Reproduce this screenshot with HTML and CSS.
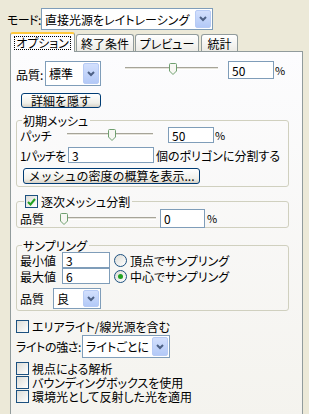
FILE: index.html
```html
<!DOCTYPE html>
<html lang="ja">
<head>
  <meta charset="UTF-8" />
  <title>レンダリング設定</title>
  <link rel="stylesheet" href="styles.css">
</head>
<body>
  <div class="dialog">
    <div class="mode-row">
      <span class="mode-label">モード:</span>
      <div class="combo mode-combo">
        <span class="combo-text">直接光源をレイトレーシング</span>
        <span class="combo-btn"><svg width="8" height="6" viewBox="0 0 8 6"><polyline points="1,1 4,4 7,1" fill="none" stroke="#4d6185" stroke-width="2"/></svg></span>
      </div>
    </div>

    <div class="tabs">
      <div class="tab active"><span class="focus">オプション</span></div>
      <div class="tab tab-end">終了条件</div>
      <div class="tab tab-preview">プレビュー</div>
      <div class="tab tab-stats">統計</div>
    </div>

    <div class="panel">
      <div class="row quality-row">
        <span class="quality-label">品質:</span>
        <div class="combo quality-combo">
          <span class="combo-text">標準</span>
          <span class="combo-btn"><svg width="8" height="6" viewBox="0 0 8 6"><polyline points="1,1 4,4 7,1" fill="none" stroke="#4d6185" stroke-width="2"/></svg></span>
        </div>
        <div class="slider slider-main">
          <div class="track"></div>
          <svg class="thumb" style="left: 44px" width="8" height="12" viewBox="0 0 8 12"><path d="M0.5 1.5 Q0.5 0.5 1.5 0.5 H6.5 Q7.5 0.5 7.5 1.5 V8 L4 11.5 L0.5 8 Z" fill="#f7f7f3" stroke="#6f9f6f"/></svg>
        </div>
        <div class="field field-main">50</div>
        <span class="pct">%</span>
      </div>

      <button class="btn btn-details">詳細を隠す</button>

      <fieldset class="group group-mesh">
        <legend>初期メッシュ</legend>
        <div class="row patch-row">
          <span class="patch-label">パッチ</span>
          <div class="slider slider-patch">
            <div class="track"></div>
            <svg class="thumb" style="left: 41px" width="8" height="12" viewBox="0 0 8 12"><path d="M0.5 1.5 Q0.5 0.5 1.5 0.5 H6.5 Q7.5 0.5 7.5 1.5 V8 L4 11.5 L0.5 8 Z" fill="#f7f7f3" stroke="#6f9f6f"/></svg>
          </div>
          <div class="field field-patch">50</div>
          <span class="pct">%</span>
        </div>
        <div class="row split-row">
          <span class="split-label">1パッチを</span>
          <div class="field field-split">3</div>
          <span class="split-text">個のポリゴンに分割する</span>
        </div>
        <button class="btn btn-density">メッシュの密度の概算を表示...</button>
      </fieldset>

      <fieldset class="group group-sub">
        <legend><span class="check checked"><svg width="9" height="8" viewBox="0 0 9 8"><polyline points="1,4 3.5,6.5 8,1" fill="none" stroke="#21a121" stroke-width="2"/></svg></span>逐次メッシュ分割</legend>
        <div class="row sub-row">
          <span class="sub-label">品質</span>
          <div class="slider slider-sub">
            <div class="track"></div>
            <svg class="thumb" style="left: 0" width="8" height="12" viewBox="0 0 8 12"><path d="M0.5 1.5 Q0.5 0.5 1.5 0.5 H6.5 Q7.5 0.5 7.5 1.5 V8 L4 11.5 L0.5 8 Z" fill="#f7f7f3" stroke="#6f9f6f"/></svg>
          </div>
          <div class="field field-sub">0</div>
          <span class="pct">%</span>
        </div>
      </fieldset>

      <fieldset class="group group-sampling">
        <legend>サンプリング</legend>
        <div class="sampling-grid">
          <span class="samp-label">最小値</span>
          <div class="field field-samp">3</div>
          <span class="radio"></span>
          <span class="radio-text">頂点でサンプリング</span>
          <span class="samp-label">最大値</span>
          <div class="field field-samp">6</div>
          <span class="radio selected"><span class="dot"></span></span>
          <span class="radio-text">中心でサンプリング</span>
        </div>
        <div class="row samp-quality">
          <span class="samp-q-label">品質</span>
          <div class="combo samp-combo">
            <span class="combo-text">良</span>
            <span class="combo-btn"><svg width="8" height="6" viewBox="0 0 8 6"><polyline points="1,1 4,4 7,1" fill="none" stroke="#4d6185" stroke-width="2"/></svg></span>
          </div>
        </div>
      </fieldset>

      <div class="check-row area-row"><span class="check"></span>エリアライト/線光源を含む</div>

      <div class="row light-row">
        <span class="light-label">ライトの強さ:</span>
        <div class="combo light-combo">
          <span class="combo-text">ライトごとに</span>
          <span class="combo-btn"><svg width="8" height="6" viewBox="0 0 8 6"><polyline points="1,1 4,4 7,1" fill="none" stroke="#4d6185" stroke-width="2"/></svg></span>
        </div>
      </div>

      <div class="check-list">
        <div class="check-row"><span class="check"></span>視点による解析</div>
        <div class="check-row"><span class="check"></span>バウンディングボックスを使用</div>
        <div class="check-row"><span class="check"></span>環境光として反射した光を適用</div>
      </div>
    </div>
  </div>
</body>
</html>
```

FILE: styles.css
```css
* {
  margin: 0;
  padding: 0;
  box-sizing: border-box;
}

body {
  background: #ece9d8;
  font-family: "Noto Sans CJK JP", sans-serif;
  font-size: 12px;
  line-height: 13px;
  color: #000;
  width: 309px;
  height: 414px;
  overflow: hidden;
  font-feature-settings: "palt";
  white-space: nowrap;
}

.dialog {
  display: flex;
  flex-direction: column;
}

/* mode selector */
.mode-row {
  display: flex;
  align-items: center;
  padding: 8px 0 0 7px;
}

.mode-label {
  width: 34px;
  flex-shrink: 0;
  letter-spacing: -0.6px;
}

.combo {
  display: flex;
  align-items: stretch;
  background: #fff;
  border: 1px solid #7f9db9;
  padding: 1px;
  flex-shrink: 0;
}

.combo-text {
  flex: 1;
  display: flex;
  align-items: center;
  padding-left: 2px;
  overflow: hidden;
}

.combo-btn {
  width: 16px;
  display: flex;
  align-items: center;
  justify-content: center;
  border: 1px solid #b7cbf5;
  border-radius: 2px;
  background: linear-gradient(#d3e0fd, #b3c9f7);
}

.mode-combo {
  width: 172px;
  height: 22px;
}

/* tabs */
.tabs {
  display: flex;
  align-items: flex-end;
  padding-left: 10px;
  margin-top: 2px;
  height: 19px;
  position: relative;
  z-index: 1;
}

.tab {
  height: 17px;
  margin-left: 1px;
  border: 1px solid #919b9c;
  border-bottom: none;
  border-radius: 3px 3px 0 0;
  background: linear-gradient(#fff, #ecebe6);
  display: flex;
  align-items: center;
  justify-content: center;
  padding-top: 1px;
}

.tab.active {
  margin-left: 0;
  width: 65px;
  height: 20px;
  margin-bottom: -1px;
  background: #fcfcfe;
  border-top: 2px solid #ffc83c;
  padding-top: 0;
}

.focus {
  border: 1px dotted #000;
  padding: 0 1px;
  line-height: 12px;
}

.tab-end {
  width: 58px;
}

.tab-preview {
  width: 64px;
}

.tab-stats {
  width: 37px;
  margin-left: 2px;
}

/* panel */
.panel {
  margin-left: 10px;
  width: 293px;
  height: 370px;
  border: 1px solid #919b9c;
  background: linear-gradient(#fcfcfe, #f4f3ee);
  padding: 9px 0 0 5px;
  display: flex;
  flex-direction: column;
}

.row {
  display: flex;
  align-items: center;
}

.row > span {
  flex-shrink: 0;
}

.quality-row {
  height: 26px;
  align-items: flex-start;
}

.quality-label {
  width: 29px;
  margin-top: 7px;
}

.quality-combo {
  width: 56px;
  height: 25px;
}

.slider {
  position: relative;
  height: 12px;
  flex-shrink: 0;
}

.track {
  position: absolute;
  left: 0;
  right: 0;
  top: 4px;
  height: 3px;
  border-top: 1px solid #a6a498;
  border-bottom: 1px solid #fff;
  background: #e6e4dc;
}

.thumb {
  position: absolute;
  top: 0;
}

.slider-main {
  width: 93px;
  margin: 2px 0 0 24px;
}

.field {
  background: #fff;
  border: 1px solid #7f9db9;
  padding-left: 3px;
  display: flex;
  align-items: center;
  flex-shrink: 0;
}

.field-main {
  width: 46px;
  height: 18px;
  margin-left: 10px;
}

.pct {
  margin-left: 1px;
  font-size: 11px;
}

.quality-row .pct {
  margin-top: 3px;
}

.btn {
  font-family: inherit;
  font-size: 12px;
  line-height: 12px;
  border: 1px solid #003c74;
  border-radius: 3px;
  background: linear-gradient(#fff, #f0f0ea 70%, #d6d0c5);
  color: #000;
}

.btn-details {
  width: 80px;
  height: 15px;
  margin: 6px 0 0 5px;
}

/* group boxes */
.group {
  width: 273px;
  border: 1px solid #d0d0bf;
  border-radius: 3px;
  margin: 0;
  min-width: 0;
}

.group legend {
  margin-left: 2px;
  padding: 0 2px 0 1px;
  line-height: 13px;
  display: flex;
  align-items: center;
}

.group-mesh {
  margin-top: 6px;
  height: 73px;
  padding: 0 0 0 3px;
}

.patch-row {
  height: 16px;
}

.patch-label {
  width: 47px;
}

.slider-patch {
  width: 86px;
}

.field-patch {
  width: 46px;
  height: 16px;
  margin-left: 15px;
}

.split-row {
  height: 16px;
  margin-top: 4px;
}

.split-label {
  width: 48px;
  letter-spacing: -0.8px;
}

.field-split {
  width: 86px;
  height: 16px;
}

.split-text {
  margin-left: 2px;
}

.btn-density {
  width: 177px;
  height: 16px;
  margin: 5px 0 0 3px;
}

.group-sub {
  margin-top: 8px;
  height: 33px;
  padding: 0 0 0 3px;
}

.check {
  width: 13px;
  height: 13px;
  border: 1px solid #1c5180;
  background: linear-gradient(135deg, #dcdcd7, #fff);
  display: inline-flex;
  align-items: center;
  justify-content: center;
  margin-right: 3px;
  flex-shrink: 0;
}

.group-sub legend {
  margin-left: 4px;
}

.sub-row {
  height: 19px;
  margin-top: 1px;
}

.sub-label {
  width: 40px;
}

.slider-sub {
  width: 96px;
}

.field-sub {
  width: 45px;
  height: 19px;
  margin-left: 4px;
}

.sub-row .pct {
  margin-left: 2px;
}

.group-sampling {
  margin-top: 11px;
  height: 72px;
  padding: 0 0 0 3px;
}

.sampling-grid {
  display: grid;
  grid-template-columns: 42px 48px 15px auto;
  grid-auto-rows: 16px;
  row-gap: 0;
  align-items: center;
}

.field-samp {
  height: 16px;
}

.radio {
  width: 13px;
  height: 13px;
  border: 1px solid #1c5180;
  border-radius: 50%;
  background: linear-gradient(135deg, #dcdcd7, #fff);
  margin-left: 4px;
  display: flex;
  align-items: center;
  justify-content: center;
}

.radio-text {
  margin-left: 5px;
}

.dot {
  width: 5px;
  height: 5px;
  border-radius: 50%;
  background: #21a121;
}

.samp-quality {
  margin-top: 4px;
}

.samp-q-label {
  width: 33px;
}

.samp-combo {
  width: 48px;
  height: 21px;
}

.check-row {
  display: flex;
  align-items: center;
  height: 13px;
}

.area-row {
  margin-top: 9px;
}

.light-row {
  margin-top: 2px;
  height: 23px;
}

.light-label {
  width: 66px;
  letter-spacing: -0.4px;
}

.light-combo {
  width: 88px;
  height: 23px;
}

.check-list {
  margin-top: 4px;
  display: flex;
  flex-direction: column;
  gap: 1px;
}
```
